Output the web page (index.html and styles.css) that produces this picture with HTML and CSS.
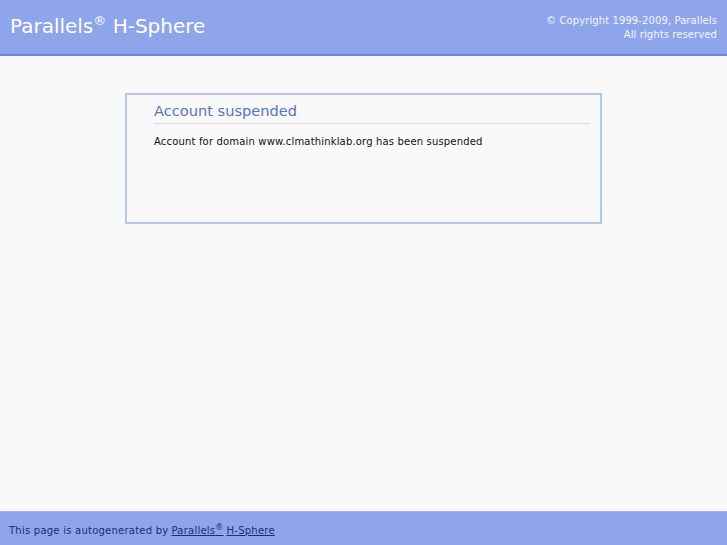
FILE: index.html
```html
<!DOCTYPE html>
<html lang="en">
<head>
  <meta charset="UTF-8">
  <title>Account suspended</title>
  <link rel="stylesheet" href="styles.css">
</head>
<body>

<div class="header">
  <div class="logo">Parallels<sup>&reg;</sup> H-Sphere</div>
  <div class="copyright">&copy; Copyright 1999-2009, Parallels<br>All rights reserved</div>
</div>

<div class="content">
  <div class="message">
    <h1>Account suspended</h1>
    <p>Account for domain www.clmathinklab.org has been suspended</p>
  </div>
</div>

<div class="footer">
  This page is autogenerated by <a href="#">Parallels<sup>&reg;</sup></a> <a href="#">H-Sphere</a>
</div>

</body>
</html>
```

FILE: styles.css
```css
html, body {
  height: 100%;
}
body {
  margin: 0;
  font-family: 'DejaVu Sans', Verdana, sans-serif;
  background-color: #f9f9f9;
  display: flex;
  flex-direction: column;
}
.header {
  height: 54px;
  background: #8ea5eb;
  border-bottom: 2px solid #7187de;
  display: flex;
  justify-content: space-between;
  align-items: flex-start;
  color: #fff;
}
.logo {
  font-size: 20px;
  padding: 14px 0 0 10px;
}
.logo sup {
  font-size: 13px;
  line-height: 0;
}
.copyright {
  font-size: 10px;
  letter-spacing: 0.1px;
  line-height: 14px;
  text-align: right;
  padding: 14px 10px 0 0;
  color: #f4f6ff;
}
.content {
  flex: 1;
  padding-top: 37px;
}
.message {
  height: 127px;
  margin: 0 auto;
  border: 2px solid #b5c8ea;
  padding: 0 10px 0 27px;
  width: 436px;
}
.message h1 {
  font-size: 14.6px;
  font-weight: normal;
  color: #5673bd;
  margin: 7px 0 0;
  padding-bottom: 4px;
  border-bottom: 1px solid #dcdcdc;
}
.message p {
  font-size: 10px;
  letter-spacing: 0.17px;
  color: #111;
  margin: 12px 0 0;
}
.footer {
  height: 34px;
  background: #8ea5eb;
  border-top: 1px solid #9fb2ef;
  font-size: 10px;
  letter-spacing: 0.24px;
  color: #1e2b7a;
  padding: 4px 0 0 9px;
  box-sizing: border-box;
  display: flex;
  align-items: center;
}
.footer a {
  color: #1e2b7a;
  margin-left: 3px;
}
.footer sup {
  font-size: 8px;
  line-height: 0;
}
```
